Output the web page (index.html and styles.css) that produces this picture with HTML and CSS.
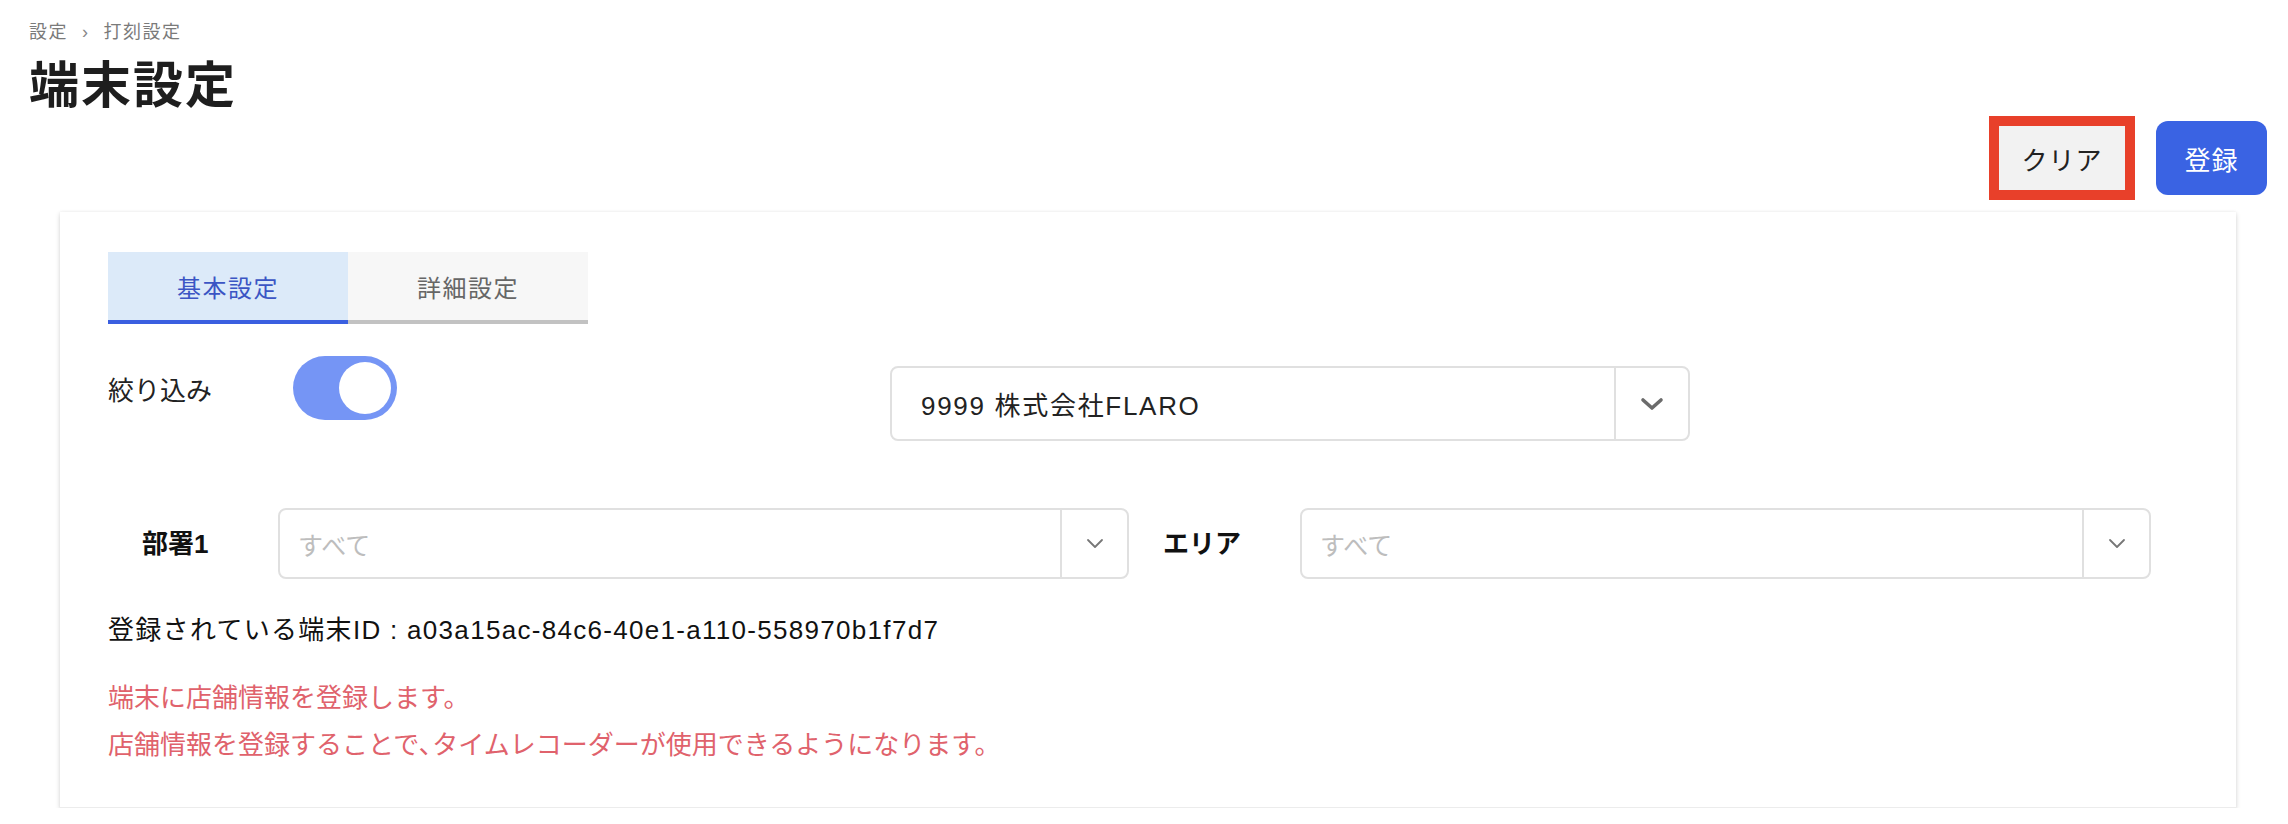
FILE: index.html
```html
<!DOCTYPE html>
<html lang="ja">
<head>
<meta charset="utf-8">
<title>端末設定</title>
<link rel="stylesheet" href="styles.css">
</head>
<body>
<div class="page">
  <header class="page-header">
    <nav class="breadcrumb"><span>設定</span><span class="sep">›</span><span>打刻設定</span></nav>
    <h1 class="title">端末設定</h1>
  </header>
  <div class="actions">
    <button class="btn btn-clear">クリア</button>
    <button class="btn btn-primary">登録</button>
  </div>
  <section class="card">
    <div class="tabs">
      <div class="tab active">基本設定</div>
      <div class="tab">詳細設定</div>
    </div>
    <div class="filter-row">
      <div class="filter-label">絞り込み</div>
      <div class="toggle-cell"><div class="toggle"><div class="knob"></div></div></div>
      <div class="select select-lg">
        <div class="select-value">9999 株式会社FLARO</div>
        <div class="select-arrow">
          <svg width="24" height="14" viewBox="0 0 24 14"><polyline points="3,3 12,11 21,3" fill="none" stroke="#6b6b6b" stroke-width="3.6" stroke-linecap="round" stroke-linejoin="round"/></svg>
        </div>
      </div>
    </div>
    <div class="dept-row">
      <div class="field-label">部署1</div>
      <div class="select select-md">
        <div class="select-value placeholder">すべて</div>
        <div class="select-arrow">
          <svg width="18" height="11" viewBox="0 0 18 11"><polyline points="2,2 9,9 16,2" fill="none" stroke="#777" stroke-width="1.8" stroke-linecap="round" stroke-linejoin="round"/></svg>
        </div>
      </div>
      <div class="field-label">エリア</div>
      <div class="select select-md">
        <div class="select-value placeholder">すべて</div>
        <div class="select-arrow">
          <svg width="18" height="11" viewBox="0 0 18 11"><polyline points="2,2 9,9 16,2" fill="none" stroke="#777" stroke-width="1.8" stroke-linecap="round" stroke-linejoin="round"/></svg>
        </div>
      </div>
    </div>
    <p class="device-id">登録されている端末ID : a03a15ac-84c6-40e1-a110-558970b1f7d7</p>
    <div class="notice">
      <p>端末に店舗情報を登録します。</p>
      <p>店舗情報を登録することで､タイムレコーダーが使用できるようになります。</p>
    </div>
  </section>
</div>
</body>
</html>
```
FILE: styles.css
```css
* { box-sizing: border-box; }
html, body { margin: 0; padding: 0; background: #fff; }
body {
  font-family: "Liberation Sans", "Noto Sans CJK JP", sans-serif;
  color: #222;
}
.page { padding-top: 20px; }
.page-header { padding-left: 29px; }
.breadcrumb {
  font-size: 18px;
  line-height: 24px;
  height: 24px;
  color: #7a7a7a;
  letter-spacing: 1.5px;
  display: flex;
  gap: 14px;
}
.breadcrumb .sep { color: #888; }
.title {
  margin: 12px 0 0;
  font-size: 50px;
  line-height: 60px;
  height: 60px;
  font-weight: 700;
  letter-spacing: 2px;
  color: #1e1e1e;
}
.actions {
  display: flex;
  justify-content: flex-end;
  align-items: center;
  gap: 21px;
  padding-right: 21px;
  height: 84px;
}
.btn {
  font-family: inherit;
  font-size: 26px;
  cursor: pointer;
}
.btn-clear {
  width: 146px;
  height: 84px;
  border: 10px solid #e8402a;
  background: #f2f2f2;
  color: #222;
  padding: 0;
  letter-spacing: 1px;
}
.btn-primary {
  width: 111px;
  height: 74px;
  border: none;
  border-radius: 12px;
  background: #3a63e3;
  color: #fff;
  letter-spacing: 1px;
}
.card {
  margin: 12px 52px 0 60px;
  height: 596px;
  background: #fff;
  border-bottom: 1px solid #ececec;
  box-shadow: 0 2px 5px rgba(0, 0, 0, 0.16), 0 0 3px rgba(0, 0, 0, 0.05);
  padding: 40px 48px 0;
}
.tabs { display: flex; }
.tab {
  width: 240px;
  height: 72px;
  display: flex;
  align-items: center;
  justify-content: center;
  font-size: 24px;
  letter-spacing: 1.5px;
  background: #f7f7f7;
  color: #666;
  border-bottom: 4px solid #c2c2c2;
}
.tab.active {
  background: #dceaf9;
  color: #3b55c4;
  border-bottom-color: #3a5fe0;
}
.filter-row {
  display: grid;
  grid-template-columns: 185px 597px 800px;
  align-items: start;
  height: 117px;
}
.filter-label {
  font-size: 26px;
  line-height: 36px;
  height: 36px;
  margin-top: 49px;
  color: #222;
}
.toggle-cell { padding-top: 32px; }
.toggle {
  width: 104px;
  height: 64px;
  border-radius: 32px;
  background: #7595f5;
  position: relative;
}
.knob {
  position: absolute;
  top: 6px;
  right: 6px;
  width: 52px;
  height: 52px;
  border-radius: 50%;
  background: #fff;
}
.select {
  display: flex;
  border: 2px solid #e0e0e0;
  border-radius: 8px;
  background: #fff;
}
.select-lg { height: 75px; margin-top: 42px; }
.select-value {
  flex: 1;
  display: flex;
  align-items: center;
  font-size: 26px;
  color: #222;
}
.select-lg .select-value { padding-left: 29px; letter-spacing: 1.7px; }
.select-md .select-value { padding-left: 18px; font-size: 25px; }
.placeholder { color: #bdbdbd; }
.select-arrow {
  display: flex;
  align-items: center;
  justify-content: center;
  border-left: 2px solid #e0e0e0;
}
.select-lg .select-arrow { width: 74px; }
.select-md .select-arrow { width: 67px; }
.dept-row {
  display: grid;
  grid-template-columns: 170px 851px 171px 851px;
  align-items: center;
  height: 71px;
  margin-top: 67px;
}
.field-label {
  padding-left: 34px;
  font-size: 26px;
  line-height: 36px;
  height: 36px;
  font-weight: 700;
  color: #111;
}
.select-md { height: 71px; }
.device-id {
  margin: 33px 0 0;
  font-size: 26px;
  line-height: 36px;
  height: 36px;
  letter-spacing: 1.3px;
  color: #111;
}
.notice {
  margin-top: 27px;
  color: #e0626c;
  font-size: 26px;
  line-height: 47px;
}
.notice p { margin: 0; height: 47px; }
```
